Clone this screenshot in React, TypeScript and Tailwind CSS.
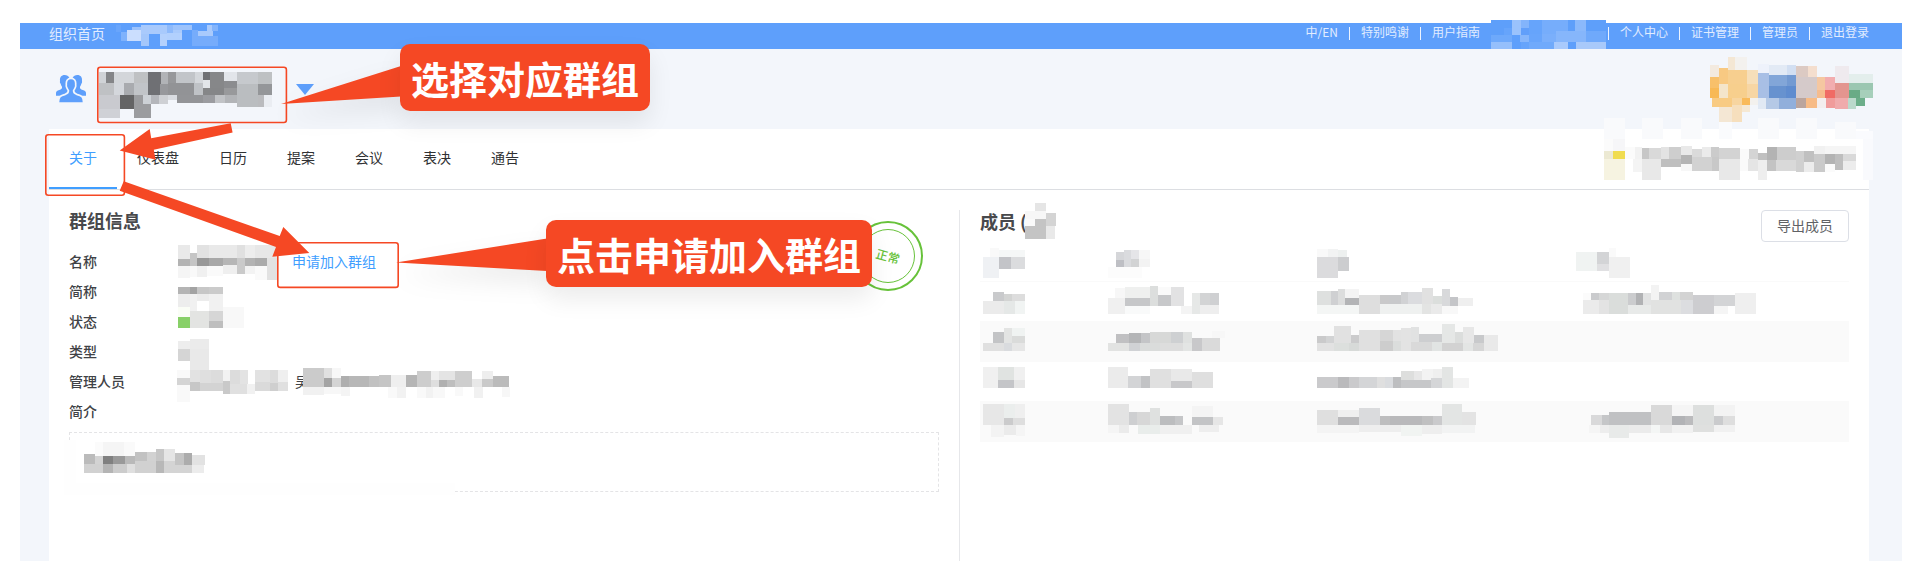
import React, { useState } from 'react';

// Each block is "left top right bottom colour", three units to a pixel.
const Mosaic: React.FC<{ x: number; y: number; w: number; h: number; blocks: string; className?: string }> = ({
  x, y, w, h, blocks, className = '',
}) => (
  <svg
    aria-hidden="true"
    width={w}
    height={h}
    viewBox={`${x} ${y} ${w * 3} ${h * 3}`}
    shapeRendering="crispEdges"
    className={`block shrink-0 overflow-visible ${className}`}
  >
    {blocks.trim().split(/\s*,\s*/).filter(Boolean).map((b, i) => {
      const [x1, y1, x2, y2, c] = b.split(' ');
      return <rect key={i} x={x1} y={y1} width={+x2 - +x1} height={+y2 - +y1} fill={`#${c}`} />;
    })}
  </svg>
);

const orgBlocks = `348 75 363 96 69a5fb, 363 96 381 123 7fb2fc, 381 90 423 123 cbdefe, 396 81 423 90 9dc3fc, 423 75 477 102 a9cafc,
423 102 447 138 a4c7fb, 477 75 501 102 a9cafc, 501 75 519 99 8ebafb, 519 75 576 90 9dc3fc, 480 102 501 138 b4d1fd, 501 99 546 120 b2d0fd,
519 90 546 99 a9cafc, 576 90 594 138 76acfb, 594 93 639 108 a9cafc, 621 75 636 93 a9cafc, 636 75 654 93 83b4fc, 594 108 654 138 76acfb`;

const userBlocks = `36 30 381 75 5e9ffa, 36 75 99 96 6ea9fb, 36 96 99 129 95bffb, 75 54 99 75 66a4fb, 99 30 126 75 9ac2fc, 126 30 150 54 83b4fb,
126 54 150 75 619ffa, 123 75 150 96 86b6fb, 150 30 189 72 66a4fb, 189 30 267 72 76adfb, 150 72 189 96 68a5fb, 189 72 231 96 7aaffb,
231 63 288 96 86b6fb, 267 30 288 63 5e9ffa, 288 30 321 63 8bb9fb, 267 63 321 96 86b6fb, 321 63 381 96 6fa9fb, 126 96 150 129 66a4fb,
123 129 150 165 93bdfb, 150 96 225 120 70aafb, 225 96 267 120 a9cafc, 291 96 381 138 a8c9fa`;

const groupNameBlocks = `177 66 198 99 d0d3d7, 198 66 222 99 848588, 222 66 282 99 d3d6da, 282 66 324 99 bfc1c3, 324 66 363 135 6f7074,
363 66 384 102 b1b3b7, 384 66 408 99 97989b, 408 66 465 99 c2c5c9, 465 66 489 99 d4d7db, 489 66 510 90 707174, 510 66 552 114 868789,
552 66 591 93 e2e5ea, 591 66 654 101 c6c9cd, 654 66 696 101 bec1c3, 177 99 222 135 bfc1c4, 222 99 252 135 d4d7dc, 252 99 282 135 a9abaf,
282 99 324 135 c1c4c8, 360 102 384 135 97989c, 384 99 462 135 929396, 462 99 489 135 bfc2c6, 489 90 510 114 e2e5e9, 489 114 552 135 858688,
552 93 591 114 8b8c8f, 552 114 591 135 98999b, 591 101 654 171 babdc0, 654 101 696 135 949699, 177 135 240 177 c9cacf, 240 135 282 177 646465,
282 135 333 204 9b9c9f, 309 135 333 162 cdd1d6, 333 135 357 162 b4b6bb, 357 135 384 162 ced0d4, 384 135 411 150 d9dce1, 411 135 489 159 939497,
489 135 525 159 9b9ca0, 525 135 555 159 c1c3c6, 555 135 591 159 b2b4b7, 654 135 672 171 babbbe, 672 135 696 171 eaedf2, 177 177 240 204 cfd1d6`;

const logoBlocks = `390 75 417 111 f3eadf, 444 51 465 90 f4e7d4, 465 51 501 90 f3f1ee, 417 84 444 132 f8c982, 444 90 501 132 f7cf8f, 501 90 534 132 f6dfba,
390 111 417 144 f8c06a, 390 144 417 174 f8b955, 417 132 444 174 f4e5cb, 444 132 501 174 f7cf8d, 501 132 534 174 f7d6a4, 396 174 456 201 f8cb83,
456 174 486 195 f7d5a0, 486 174 510 195 f9ba5a, 510 174 534 195 f3f1ee, 417 201 456 246 f4e7d4, 456 195 486 246 f6dfbd, 486 195 510 216 f5e8d3,
534 72 567 99 eef2fb, 534 99 567 174 a8bfe5, 567 75 621 105 e2eaf5, 621 75 648 105 d2dff2, 567 105 621 138 82a6d8, 621 105 648 138 739ad2,
567 138 618 174 6792cf, 618 138 648 174 5f8ccf, 534 174 558 207 e1e9f4, 558 174 597 207 b5c9e6, 597 174 648 207 91afdb, 648 78 684 111 dccac3,
684 78 711 111 f4dece, 648 111 711 174 d5caca, 648 174 678 204 bba59d, 678 174 711 204 f7bb86, 711 111 735 150 f5c7a1, 711 150 735 174 f6bc8e,
735 111 765 150 f2adaf, 735 150 765 174 f06b65, 711 174 738 204 f3eeee, 738 174 765 204 f09c9b, 765 78 807 129 efeaee, 765 129 807 174 e3958f,
765 174 804 207 f0abac, 807 102 879 129 e3eeec, 807 129 879 150 9bc7b1, 807 150 840 174 69ab86, 840 150 879 174 a6cfba, 804 174 828 207 bbd9cc, 828 174 855 198 6cae8a`;

const noticeBlocks = `72 234 135 297 f9fafc, 186 234 249 297 f9fafc, 303 234 366 297 f9fafc, 417 246 456 297 fafbfd, 534 234 597 297 f9fafc,
648 234 711 297 f9fafc, 765 246 828 297 f9fafc, 828 273 879 297 fafbfe, 850 297 879 420 f9fafd, 72 297 99 333 fbfbfb, 99 297 135 333 f6f6f8, 72 333 99 357 ece9d3,
99 333 135 357 f0dc50, 72 357 135 420 f6f3e1, 135 321 165 357 fbfbfb, 165 321 186 357 f2f2f2, 159 357 186 396 f4f4f4, 186 324 207 357 c7c7c7,
207 324 243 357 d9d9d9, 186 357 243 420 e8e8e8, 243 321 267 357 e3e3e3, 267 321 303 357 cecece, 243 357 303 381 bfbfbf, 303 318 336 345 e9e9e9,
303 345 336 372 b4b4b4, 303 372 336 393 f7f7f7, 336 327 366 351 dadada, 366 321 393 351 ebebeb, 393 321 417 351 cbcbcb, 336 351 396 393 d2d2d2,
396 351 417 393 c8c8c8, 417 324 480 357 d3d3d3, 417 357 480 420 e8e8e8, 480 327 507 393 fafafa, 507 327 534 357 d4d4d4, 504 357 534 393 e5e5e5,
534 339 561 360 c0c0c0, 534 360 561 420 eeeeee, 561 321 591 360 b3b3b3, 561 360 588 393 c3c3c3, 591 321 648 360 cdcdcd, 588 360 648 393 d9d9d9,
648 333 672 396 d0d0d0, 672 333 702 366 c0c0c0, 672 366 702 396 ececec, 702 318 735 342 f1f1f1, 702 342 735 396 cacaca, 735 318 828 342 f5f5f5,
735 342 765 372 b3b3b3, 735 372 765 396 fbfbfb, 765 342 789 390 bebebe, 789 342 828 363 d9d9d9, 789 363 828 390 ececec`;

const nameBlocks = `354 15 390 57 e9e9e9, 390 39 411 78 c5c5c5, 411 15 447 54 e2e2e2, 447 15 531 54 e9e9e9, 531 15 555 54 e0e0e0, 555 15 585 54 ededed,
585 15 650 54 e7e7e7, 354 57 390 78 b3b3b3, 411 54 447 78 989898, 447 54 489 78 a8a8a8, 489 54 531 75 b6b6b6, 531 54 555 102 cacaca,
555 54 585 78 b3b3b3, 585 54 621 78 ababab, 621 54 650 120 e2e2e2, 354 78 390 114 f5f5f5, 390 78 411 111 f9f9f9, 411 78 441 111 f0f0f0,
441 78 489 108 fafafa, 489 75 531 102 efefef, 555 78 585 102 f3f3f3, 585 78 621 120 fafafa`;

const shortBlocks = `354 141 390 162 b4b4b4, 390 141 411 162 a3a3a3, 411 141 447 162 c7c7c7, 447 141 489 162 cbcbcb, 354 162 390 201 ededed,
390 162 411 213 f1f1f1, 411 162 447 183 ececec, 447 162 489 213 f1f1f1`;

const stateBlocks = `354 201 390 231 fafdf6, 354 231 390 264 88d068, 390 213 447 264 e3e4e2, 447 213 489 243 d6d6d6, 447 243 489 264 bebebe, 489 201 552 264 f8f8f8`;

const typeBlocks = `354 303 390 327 ededed, 354 327 390 363 d5d5d5, 390 297 447 327 ebebeb, 390 327 447 390 e9e9e9`;

const adminBlocks = `351 390 390 414 f9f9f9, 351 414 390 435 d4d4d4, 351 435 390 486 f9f9f9, 390 390 420 426 e2e2e2, 420 390 453 429 dfdfdf, 453 390 489 429 dcdcdc,
390 426 420 453 c7c7c7, 420 429 489 453 d3d3d3, 489 390 510 423 f2f2f2, 489 423 510 462 c9c9c9, 510 390 540 432 dcdcdc, 540 390 564 432 e3e3e3,
510 432 561 462 e0e0e0, 561 432 585 462 f1f1f1, 585 390 630 426 e2e2e2, 630 390 654 429 dcdcdc, 654 390 684 426 efefef, 585 426 630 453 dadada,
630 429 654 453 cfcfcf, 654 426 684 453 e0e0e0`;

const adminMoreBlocks = `729 384 792 441 cbcbcb, 792 384 816 414 e0e0e0, 816 384 843 414 f7f7f7, 792 414 816 441 a4a4a4, 816 414 843 441 d4d4d4,
843 408 867 441 aeaeae, 867 408 927 441 b7b7b7, 927 408 957 441 c1c1c1, 957 405 993 441 c5c5c5, 993 405 1038 441 efefef, 1038 405 1071 441 b5b5b5,
1071 393 1113 441 cdcdcd, 1113 393 1137 420 efefef, 1113 420 1137 441 dedede, 1137 393 1185 420 e4e4e4, 1137 420 1161 441 b0b0b0, 1161 420 1185 441 bebebe,
1185 393 1236 441 cecece, 1236 417 1266 441 e8e8e8, 1266 393 1299 417 eeeeee, 1266 417 1299 441 cacaca, 1299 408 1347 441 bbbbbb, 729 441 792 465 f1f1f1,
792 441 843 462 f7f7f7, 843 441 870 468 f4f4f4, 984 441 1011 474 f9f9f9, 1011 441 1038 474 f2f2f2, 1071 441 1098 474 f9f9f9, 1098 441 1119 474 f2f2f2,
1119 441 1155 474 f8f8f8, 1185 441 1209 468 f9f9f9, 1242 441 1269 474 f1f1f1, 1326 441 1350 471 f7f7f7`;

const introBlocks = `12 600 47 762 fefefe, 12 728 1185 765 fefefe, 105 606 129 648 fbfbfb, 129 606 192 648 f5f5f5, 192 606 225 648 fafafa,
72 642 105 672 bbbbbb, 72 672 129 699 d1d1d1, 105 648 129 672 d3d3d3, 129 648 159 672 808080, 159 648 195 672 999999, 195 648 225 672 b9b9b9,
129 672 159 699 b4b4b4, 159 672 201 699 cccccc, 201 672 225 699 dfdfdf, 225 636 261 663 c2c2c2, 261 636 288 663 d2d2d2, 225 663 288 699 d1d1d1,
288 627 312 663 c6c6c6, 288 663 312 699 b8b8b8, 312 627 345 663 e5e5e5, 312 663 345 699 d4d4d4, 345 639 372 675 c4c4c4, 372 639 396 675 acacac,
345 675 396 699 d4d4d4, 396 645 435 675 e2e2e2, 396 675 432 699 ececec`;

const countBlocks = `228 39 261 63 e5e5e5, 198 63 261 87 f7f7f7, 198 87 228 108 fafafa, 228 87 261 108 c4c4c4, 198 108 261 147 c4c4c4, 261 69 291 108 d4d4d4, 261 108 288 147 e9e9e9`;

const columns = [
  { x: 60, y: 156, w: 42, col: 'w-[125px]' },
  { x: 435, y: 156, w: 114, col: 'w-[209px]' },
  { x: 42, y: 36, w: 184, col: 'w-[259px]' },
  { x: 519, y: 156, w: 183, col: '' },
];

const memberHead = [
  `90 174 117 201 f9f9f9, 117 180 195 201 f5f7f7, 69 201 117 264 eff1f4, 117 201 153 237 c3c4c8, 153 201 195 237 dbdcde`,
  `468 186 492 210 d5d6d9, 468 210 492 231 bebfc4, 492 180 513 231 dadbde, 513 180 537 207 e5e5e8, 513 207 537 231 d2d3d4, 537 180 570 207 f7f7f7, 537 207 570 231 f3f3f3, 444 231 546 264 fcfcfc`,
  `51 57 84 81 f9f9f9, 84 57 114 81 f2f3f3, 114 60 141 81 edf0ef, 51 81 114 144 dbdbdd, 114 81 147 123 cccdcf`,
  `528 186 591 243 f0f3f2, 591 186 627 222 d3d4d6, 591 222 627 243 e0e0e2, 627 174 648 201 fafafa, 627 201 690 264 f0f0f0`,
];

const members = [
  [
    `99 306 132 333 c9cacc, 132 312 156 333 d3d4d3, 156 312 195 333 dddddd, 69 333 132 372 ebebeb, 132 333 165 372 e5e8e7, 165 333 195 372 f1f4f3`,
    `465 294 495 324 f7f7f7, 495 291 570 324 eff0ef, 444 324 495 372 f0f0f0, 495 324 570 348 c6c7c9, 570 288 594 348 dcdedd, 594 315 633 348 c7c8ca, 633 291 672 348 e2e2e3, 594 291 633 315 fafafa, 495 348 570 372 f9fafa, 663 348 696 372 f4f4f4, 696 309 720 372 e6e8e7, 720 309 750 345 d3d4d5, 750 309 777 345 cfd0d2, 720 345 777 372 eeeeee`,
    `51 183 93 225 dee0df, 93 183 114 225 cfd0d2, 114 177 135 225 dcdddd, 135 177 177 204 f4f4f4, 135 204 177 225 b3b4b6, 51 225 177 252 f4f6f5, 177 195 240 252 dedede, 240 195 267 222 c9c9ca, 267 195 303 222 c8c9cb, 303 186 324 222 d1d2d4, 324 186 366 222 dbdcdf, 366 174 399 222 e1e1e1, 399 198 426 222 dbdedc, 426 177 450 228 d8d9db, 450 201 474 228 c4c5c8, 474 204 519 228 efefef, 240 222 366 252 eff1f0, 366 222 393 252 e3e4e3, 393 222 426 252 eaeaea, 426 228 474 252 f8f8f8`,
    `549 309 573 330 fbfbfb, 573 309 597 330 cacbcd, 597 309 627 330 d6d7d7, 549 330 597 372 ebebeb, 597 330 627 372 e3e3e3, 627 309 684 372 dadddb, 684 309 708 345 cbccce, 708 309 729 345 b1b2b4, 729 309 753 345 e2e3e3, 684 345 753 372 e8eae9, 753 285 777 330 f3f3f3, 777 306 816 330 d1d2d4, 816 306 840 330 dee1df, 840 306 879 330 d3d3d3, 753 330 843 372 e1e2e1, 843 330 879 372 dcdde0, 879 315 942 372 cdcdd0, 942 315 1005 348 d3d4d6, 942 348 984 372 f5f5f5, 1005 309 1068 372 efefef`,
  ],
  [
    `99 426 132 459 c3c4c6, 132 414 156 459 e3e4e3, 156 414 195 438 f0f3f2, 156 438 195 459 dadbda, 69 459 132 483 e0e0e0, 132 459 156 483 d9dbde, 156 459 195 483 e6e6e6`,
    `468 432 507 459 c0c0c2, 507 429 543 459 b4b5b7, 543 429 570 459 c4c5c7, 570 426 633 459 d7d8d7, 633 426 669 459 ced0d2, 669 426 696 459 dfe1e0, 444 459 507 483 e2e3e2, 507 459 540 483 d0d2d5, 540 459 600 483 dadcdb, 600 459 669 483 dddddd, 669 459 696 483 e3e5e4, 696 444 726 483 c8c8ca, 726 444 780 483 dadada, 756 423 795 444 f7f7f7`,
    `51 318 78 339 cacacb, 78 318 102 339 d2d3d4, 102 288 153 339 e1e1e1, 153 315 177 339 cbcbcc, 51 339 102 363 e2e2e2, 102 339 147 363 dcdfdd, 147 339 177 363 d7dad8, 177 300 240 363 e0e0e0, 240 300 279 333 d6d6d6, 240 333 279 363 cdcdcd, 279 300 303 333 e2e2e2, 279 333 303 363 dbdddc, 303 294 333 363 e3e3e3, 333 291 357 339 e1e2e2, 357 312 426 336 cdced0, 333 336 396 363 d9d9d9, 396 336 426 363 e1e4e3, 426 282 465 339 e5e7e6, 465 306 489 339 dbdddc, 489 291 522 339 e7e7e7, 426 339 489 363 d2d2d2, 489 339 519 363 e3e5e4, 522 315 552 339 c8c9cb, 519 339 552 363 d6d6d6, 552 315 594 363 e9e9e9`,
    ``,
  ],
  [
    `69 531 114 594 f0f0f0, 114 531 162 570 e0e3e1, 114 570 162 594 c4c5c8, 162 531 195 570 f0f0f0, 162 570 195 594 e6e6e6`,
    `444 531 504 594 ebebeb, 504 558 543 594 d3d4d6, 543 558 570 594 c2c3c5, 570 537 633 594 e0e0e0, 633 537 696 573 e9e9e9, 633 573 696 594 c8c8ca, 696 546 759 594 dfdfdf`,
    `51 441 114 474 cacacc, 114 441 147 474 bababc, 147 441 177 474 cacacc, 177 441 231 474 d4d5d7, 231 441 255 474 dfdfdf, 255 441 279 474 dadcdf, 279 441 303 474 bdbec0, 303 423 342 450 dddedd, 342 423 366 450 e7e7e7, 366 417 399 450 f3f3f3, 399 417 426 444 efefef, 303 450 393 474 c6c7c9, 393 444 426 474 d5d6d8, 426 411 459 474 e3e5e4, 459 444 507 474 f3f3f3`,
    ``,
  ],
  [
    `69 642 132 705 e7e7e7, 132 642 165 684 ebeeed, 165 642 195 684 efefef, 132 684 159 705 cbcbcc, 159 684 195 705 dedede, 93 705 132 741 f3f3f3, 132 705 168 735 ebebeb, 168 705 195 738 f5f5f5`,
    `444 642 507 705 e3e3e3, 507 666 531 705 cecfd1, 531 666 570 705 d7d7d7, 570 654 600 705 dfe1e0, 600 678 645 705 bcbdbf, 645 678 669 705 c5c6c8, 696 648 759 681 f4f4f4, 696 681 759 705 c3c4c6, 759 681 789 705 e6e6e6, 444 705 477 729 f5f5f5, 477 705 507 729 ebebeb, 534 705 600 732 e9edeb, 600 705 696 732 f0f0f0, 717 705 777 726 eeeeee`,
    `51 540 114 585 dfdfdf, 114 540 177 561 efefef, 114 561 177 585 bababc, 177 534 240 585 dadbdd, 240 558 270 585 bebebf, 270 558 366 585 b9b9bb, 366 558 399 585 c0c0c1, 399 558 426 585 cacacc, 426 522 486 585 e3e5e4, 486 546 528 585 e3e3e3, 51 585 177 609 f4f4f4, 177 585 303 606 eeeeee, 303 585 366 618 f1f4f2, 366 585 426 612 eeeeee, 426 585 525 609 f2f3f3`,
    `573 675 606 705 d9d9da, 606 675 627 705 c5c6c8, 627 666 753 705 c0c1c3, 753 645 816 705 d9d9d9, 816 678 855 705 b2b3b6, 855 678 879 705 bbbbbd, 816 645 879 678 f5f5f5, 879 645 942 705 dddfde, 942 645 1005 678 f3f3f3, 942 678 969 705 cacbcd, 969 678 1005 705 dedede, 567 705 600 729 f5f5f5, 600 705 627 729 ededed, 627 705 687 744 e8eae9, 687 705 753 729 ebebeb, 753 705 780 729 f4f6f5, 780 705 816 729 e7e7e7, 816 705 879 729 f1f1f1, 879 705 942 726 dfe0df, 942 705 1005 726 f1f1f1`,
  ],
];

const tabs = ['关于', '仪表盘', '日历', '提案', '会议', '表决', '通告'];

const Divider = () => <span className="mt-1 h-[13px] w-px bg-[#edf4ff]" />;

const TopBar = () => (
  <header className="flex h-[26px] justify-between bg-[#5e9ffb] pr-[33px] pl-[29px] text-[#e2edff]">
    <div className="flex items-start gap-[11px]">
      <a href="#home" className="text-sm leading-5">组织首页</a>
      <Mosaic x={348} y={69} w={102} h={26} blocks={orgBlocks} />
    </div>
    <nav className="flex items-start gap-[11px] text-xs leading-[18px]">
      <a href="#lang">中/EN</a>
      <Divider />
      <a href="#thanks">特别鸣谢</a>
      <Divider />
      <a href="#guide">用户指南</a>
      <Mosaic x={36} y={39} w={106} h={26} blocks={userBlocks} />
      <Divider />
      <a href="#me">个人中心</a>
      <Divider />
      <a href="#certs">证书管理</a>
      <Divider />
      <a href="#admin">管理员</a>
      <Divider />
      <a href="#logout">退出登录</a>
    </nav>
  </header>
);

const GroupIcon = () => (
  <svg width="30" height="28" viewBox="0 0 90 84" fill="#5e9ffb" aria-hidden="true">
    <path d="M26 0C16 0 11 7 12 17c0 3-1 5 1 8 2 3 2 7 5 10 1 5-2 8-8 10C3 47 0 49 0 55v7h40V8C37 3 33 0 26 0Z" />
    <path d="M64 0c10 0 15 7 14 17 0 3 1 5-1 8-2 3-2 7-5 10-1 5 2 8 8 10 7 2 10 4 10 10v7H50V8c3-5 7-8 14-8Z" />
    <path
      d="M45 10C35 10 30 17 31 28c0 4-1 6 1 9 2 4 3 7 5 9 1 6-2 9-9 12C14 62 7 64 7 84h76c0-20-7-22-21-26-7-3-10-6-9-12 2-2 3-5 5-9 2-3 1-5 1-9 1-11-4-18-14-18Z"
      stroke="#f3f6fb"
      strokeWidth="5"
    />
  </svg>
);

const InfoRow: React.FC<{ label: string; children?: React.ReactNode }> = ({ label, children }) => (
  <div className="flex h-[30px] items-center">
    <dt className="w-[109px] font-medium text-[#404246]">{label}</dt>
    <dd className="flex items-center">{children}</dd>
  </div>
);

const Members = () => (
  <section className="w-1/2 border-l border-[#e6e7ea] px-5">
    <div className="flex items-start justify-between">
      <h2 className="flex text-lg leading-[22px] font-bold text-[#48494c]">
        成员 (
        <Mosaic x={198} y={60} w={31} h={22} blocks={countBlocks} className="-ml-0.5" />
      </h2>
      <button className="h-8 rounded border border-[#dcdfe6] bg-white px-[15px] pb-0.5 text-sm text-[#606266]">导出成员</button>
    </div>
    <table className="w-full table-fixed border-collapse">
      <thead>
        <tr className="border-b border-[#fafafa]">
          {columns.map((c, i) => (
            <th key={i} className={`p-0 ${c.col}`}>
              <Mosaic x={c.x} y={c.y} w={c.w} h={39} blocks={memberHead[i]} />
            </th>
          ))}
        </tr>
      </thead>
      <tbody>
        {members.map((row, r) => (
          <tr key={r} className="border-b border-[#fafafa] even:bg-[#fafafa]">
            {columns.map((c, i) => (
              <td key={i} className="p-0">
                <Mosaic x={c.x} y={c.y + 120 * (r + 1)} w={c.w} h={39} blocks={row[i]} />
              </td>
            ))}
          </tr>
        ))}
      </tbody>
    </table>
  </section>
);

const Annotations = () => (
  <div className="pointer-events-none absolute inset-0">
    <svg className="absolute inset-0 h-full w-full overflow-visible" fill="#f54824" aria-hidden="true">
      <g fill="none" stroke="#f54824" strokeWidth="1.6">
        <rect x="97.8" y="67.3" width="188.6" height="55.2" rx="2.5" />
        <rect x="45.8" y="134.8" width="78.6" height="60.4" rx="2.5" />
        <rect x="277.8" y="242.8" width="120.4" height="44.6" rx="2.5" />
      </g>
      <g className="drop-shadow-[0_12px_12px_rgba(0,0,0,0.08)]">
        <polygon points="281,104 401,66 401,96.5" />
        <polygon points="396,262.5 547,238.5 547,271" />
      </g>
      <polygon points="230.7,123.3 151.2,138.2 149.7,129 119.7,150.5 155.6,159.8 153.8,149.8 232.6,132.6" />
      <polygon points="123.7,181.3 279.7,236 283.3,227 309.3,253 272.3,256.7 276,247 119.7,190.7" />
    </svg>
    <div className="absolute top-11 left-[400px] rounded-[10px] bg-[#f54824] px-[11px] py-0.5 text-[38px] leading-[63px] font-bold text-white shadow-[0_12px_24px_rgba(0,0,0,0.08)]">
      选择对应群组
    </div>
    <div className="absolute top-[220px] left-[546px] rounded-[10px] bg-[#f54824] px-[11px] py-0.5 text-[38px] leading-[63px] font-bold text-white shadow-[0_12px_24px_rgba(0,0,0,0.08)]">
      点击申请加入群组
    </div>
  </div>
);

export default function App() {
  const [active, setActive] = useState('关于');

  return (
    <div className="relative flex min-h-screen flex-col overflow-hidden bg-white px-5 pt-[23px] pb-5 font-['Noto_Sans_CJK_SC',sans-serif]">
      <TopBar />
      <main className="flex flex-1 flex-col bg-[#f3f6fb] pr-[33px] pl-[29px]">
        <div className="flex h-20 items-center justify-between pl-[7px]">
          <div className="flex items-center gap-[13px]">
            <GroupIcon />
            <button aria-label="切换群组" className="flex items-center gap-6">
              <Mosaic x={177} y={-3} w={173} h={80} blocks={groupNameBlocks} />
              <svg width="18" height="11" viewBox="0 0 18 11" fill="#5e9ffb" aria-hidden="true">
                <polygon points="0,0 18,0 9,11" />
              </svg>
            </button>
          </div>
          <Mosaic x={390} y={27} w={159} h={80} blocks={logoBlocks} />
        </div>

        <div className="flex flex-1 flex-col bg-white">
          <div className="flex justify-between border-b border-[#dcdee2]">
            <div role="tablist" className="flex">
              {tabs.map(t => (
                <button
                  key={t}
                  role="tab"
                  aria-selected={active === t}
                  onClick={() => setActive(t)}
                  className={`h-[60px] border-b-2 px-5 pb-0.5 text-sm ${active === t ? 'border-[#409eff] text-[#409eff]' : 'border-transparent text-[#303133]'}`}
                >
                  {t}
                </button>
              ))}
            </div>
            <Mosaic x={72} y={267} w={265} h={60} blocks={noticeBlocks} />
          </div>

          <div className="flex flex-1 pt-5">
            <section className="relative w-1/2 px-5">
              <h2 className="mb-4 text-lg leading-5 font-bold text-[#48494c]">群组信息</h2>
              <dl className="text-sm">
                <InfoRow label="名称">
                  <Mosaic x={354} y={18} w={96} h={30} blocks={nameBlocks} />
                  <a href="#join" className="ml-[18px] text-[#409eff]">申请加入群组</a>
                </InfoRow>
                <InfoRow label="简称">
                  <Mosaic x={354} y={108} w={45} h={30} blocks={shortBlocks} />
                </InfoRow>
                <InfoRow label="状态">
                  <Mosaic x={354} y={198} w={66} h={30} blocks={stateBlocks} />
                </InfoRow>
                <InfoRow label="类型">
                  <Mosaic x={354} y={288} w={31} h={30} blocks={typeBlocks} />
                </InfoRow>
                <InfoRow label="管理人员">
                  <Mosaic x={354} y={378} w={110} h={30} blocks={adminBlocks} />
                  <span className="ml-[7px] text-[#404246]">吴</span>
                  <Mosaic x={729} y={378} w={207} h={30} blocks={adminMoreBlocks} className="-ml-1.5" />
                </InfoRow>
                <InfoRow label="简介" />
              </dl>
              <div className="mt-1.5 h-[60px] border border-dashed border-[#e4e4e6] px-3.5 pt-[9px]">
                <Mosaic x={72} y={606} w={121} h={31} blocks={introBlocks} />
              </div>
              <div className="absolute top-[11px] right-9 flex h-[70px] w-[70px] items-center justify-center rounded-full border-2 border-[#67c23a]">
                <div className="flex h-[54px] w-[54px] items-center justify-center rounded-full border border-[#67c23a]">
                  <span className="rotate-[15deg] text-xs font-medium text-[#67c23a]">正常</span>
                </div>
              </div>
            </section>
            <Members />
          </div>
        </div>
      </main>
      <Annotations />
    </div>
  );
}
